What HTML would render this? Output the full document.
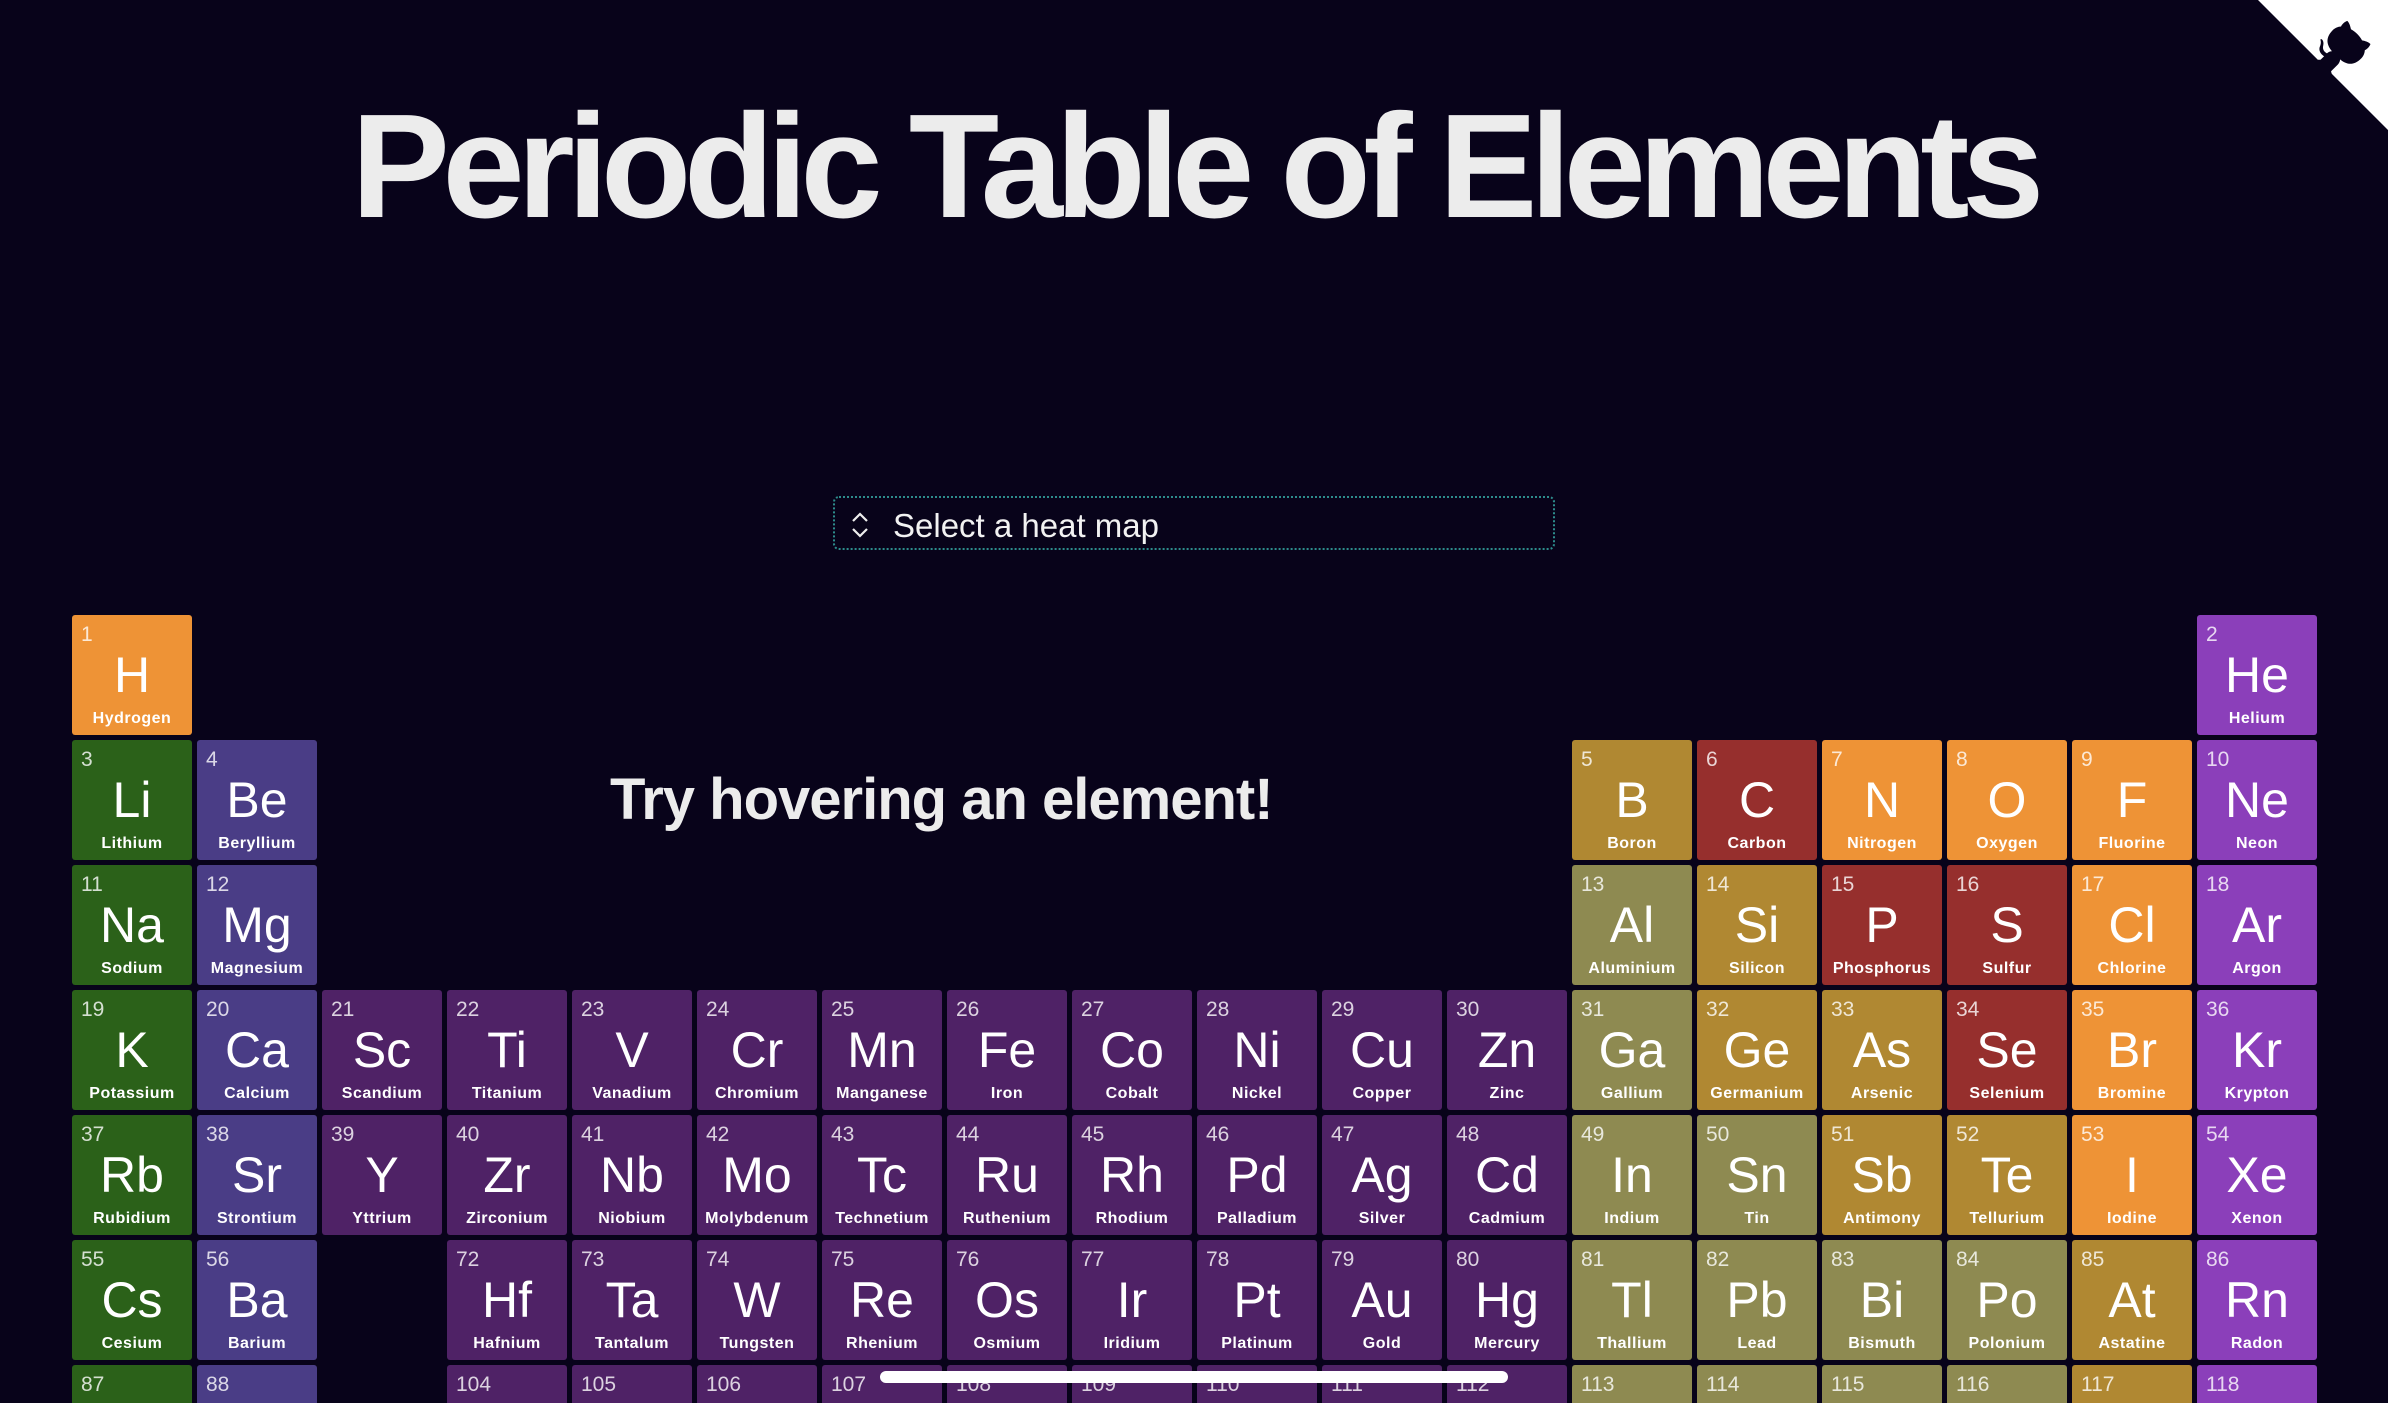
<!DOCTYPE html>
<html><head><meta charset="utf-8"><style>
html,body{margin:0;padding:0;background:#08031a;width:2388px;height:1403px;overflow:hidden;font-family:"Liberation Sans",sans-serif;color:#fff}
.wrap{position:absolute;left:0;top:0;width:2388px;height:1403px;overflow:hidden}
h1{position:absolute;left:0;width:2388px;top:92px;margin:0;text-align:center;font-size:148px;font-weight:900;letter-spacing:-7.5px;color:#ececec;line-height:150px}
.sel{position:absolute;left:833px;top:496px;width:722px;height:54px;border:2px dotted #2d8c8c;border-radius:6px;box-sizing:border-box}
.sel span{position:absolute;left:58px;top:9px;font-size:33px;color:#f2f2f2}
.sel svg{position:absolute;left:14px;top:12px}
.try{position:absolute;left:610px;top:766px;font-size:58px;font-weight:900;color:#ececec;letter-spacing:-1px}
.gw{position:absolute;left:72px;top:615px;width:2245px;height:788px;overflow:hidden}
.g{display:grid;grid-template-columns:repeat(18,120px);grid-auto-rows:120px;gap:5px}
.c{position:relative;border-radius:3px;overflow:hidden}
.c i{position:absolute;left:9px;top:8px;font-style:normal;font-size:21px;color:rgba(255,255,255,.8)}
.c b{position:absolute;left:0;right:0;top:30px;text-align:center;font-size:50px;font-weight:400;line-height:60px}
.c s{position:absolute;left:0;right:0;top:95px;text-align:center;font-size:16px;font-weight:700;text-decoration:none;letter-spacing:.5px}
.a{background:#2b6119}.e{background:#4a3d86}.t{background:#4f2266}.p{background:#8e8a51}.m{background:#b08832}.r{background:#962f2d}.o{background:#ee9336}.n{background:#8b3fba}
.bar{position:absolute;left:880px;top:1371px;width:628px;height:12px;border-radius:6px;background:#fff}
.corner{position:absolute;right:0;top:0}
</style></head><body><div class="wrap">
<h1>Periodic Table of Elements</h1>
<svg class="corner" width="130" height="130" viewBox="0 0 250 250"><path fill="#fff" d="M0,0 L115,115 L130,115 L142,142 L250,250 L250,0 Z"/><path fill="#08031a" d="M128.3,109.0 C113.8,99.7 119.0,89.6 119.0,89.6 C122.0,82.7 120.5,78.6 120.5,78.6 C119.2,72.0 123.4,76.3 123.4,76.3 C127.3,80.9 125.5,87.3 125.5,87.3 C122.9,97.6 130.6,101.9 134.4,103.2"/><path fill="#08031a" d="M115.0,115.0 C114.9,115.1 118.7,116.5 119.8,115.4 L133.7,101.6 C136.9,99.2 139.9,98.4 142.2,98.6 C133.8,88.0 127.5,74.4 143.8,58.0 C148.5,53.4 154.0,51.2 159.7,51.0 C160.3,49.4 163.2,43.6 171.4,40.1 C171.4,40.1 176.1,42.5 178.8,56.2 C183.1,58.6 187.2,61.8 190.9,65.4 C194.5,69.0 197.7,73.2 200.1,77.6 C213.8,80.2 216.3,84.9 216.3,84.9 C212.7,93.1 206.9,96.0 205.4,96.6 C205.1,102.4 203.0,107.8 198.3,112.5 C181.9,128.9 168.3,122.5 157.7,114.1 C157.9,116.9 156.7,120.9 152.7,124.9 L141.0,136.5 C139.8,137.7 141.6,141.9 141.8,141.8 Z"/></svg>
<div class="sel"><svg width="22" height="30" viewBox="0 0 22 30"><path d="M4 11 L11 4 L18 11 M4 19 L11 26 L18 19" stroke="#eee" stroke-width="2.2" fill="none"/></svg><span>Select a heat map</span></div>
<div class="try">Try hovering an element!</div>
<div class="gw"><div class="g">
<div class="c o" style="grid-area:1/1"><i>1</i><b>H</b><s>Hydrogen</s></div>
<div class="c n" style="grid-area:1/18"><i>2</i><b>He</b><s>Helium</s></div>
<div class="c a" style="grid-area:2/1"><i>3</i><b>Li</b><s>Lithium</s></div>
<div class="c e" style="grid-area:2/2"><i>4</i><b>Be</b><s>Beryllium</s></div>
<div class="c m" style="grid-area:2/13"><i>5</i><b>B</b><s>Boron</s></div>
<div class="c r" style="grid-area:2/14"><i>6</i><b>C</b><s>Carbon</s></div>
<div class="c o" style="grid-area:2/15"><i>7</i><b>N</b><s>Nitrogen</s></div>
<div class="c o" style="grid-area:2/16"><i>8</i><b>O</b><s>Oxygen</s></div>
<div class="c o" style="grid-area:2/17"><i>9</i><b>F</b><s>Fluorine</s></div>
<div class="c n" style="grid-area:2/18"><i>10</i><b>Ne</b><s>Neon</s></div>
<div class="c a" style="grid-area:3/1"><i>11</i><b>Na</b><s>Sodium</s></div>
<div class="c e" style="grid-area:3/2"><i>12</i><b>Mg</b><s>Magnesium</s></div>
<div class="c p" style="grid-area:3/13"><i>13</i><b>Al</b><s>Aluminium</s></div>
<div class="c m" style="grid-area:3/14"><i>14</i><b>Si</b><s>Silicon</s></div>
<div class="c r" style="grid-area:3/15"><i>15</i><b>P</b><s>Phosphorus</s></div>
<div class="c r" style="grid-area:3/16"><i>16</i><b>S</b><s>Sulfur</s></div>
<div class="c o" style="grid-area:3/17"><i>17</i><b>Cl</b><s>Chlorine</s></div>
<div class="c n" style="grid-area:3/18"><i>18</i><b>Ar</b><s>Argon</s></div>
<div class="c a" style="grid-area:4/1"><i>19</i><b>K</b><s>Potassium</s></div>
<div class="c e" style="grid-area:4/2"><i>20</i><b>Ca</b><s>Calcium</s></div>
<div class="c t" style="grid-area:4/3"><i>21</i><b>Sc</b><s>Scandium</s></div>
<div class="c t" style="grid-area:4/4"><i>22</i><b>Ti</b><s>Titanium</s></div>
<div class="c t" style="grid-area:4/5"><i>23</i><b>V</b><s>Vanadium</s></div>
<div class="c t" style="grid-area:4/6"><i>24</i><b>Cr</b><s>Chromium</s></div>
<div class="c t" style="grid-area:4/7"><i>25</i><b>Mn</b><s>Manganese</s></div>
<div class="c t" style="grid-area:4/8"><i>26</i><b>Fe</b><s>Iron</s></div>
<div class="c t" style="grid-area:4/9"><i>27</i><b>Co</b><s>Cobalt</s></div>
<div class="c t" style="grid-area:4/10"><i>28</i><b>Ni</b><s>Nickel</s></div>
<div class="c t" style="grid-area:4/11"><i>29</i><b>Cu</b><s>Copper</s></div>
<div class="c t" style="grid-area:4/12"><i>30</i><b>Zn</b><s>Zinc</s></div>
<div class="c p" style="grid-area:4/13"><i>31</i><b>Ga</b><s>Gallium</s></div>
<div class="c m" style="grid-area:4/14"><i>32</i><b>Ge</b><s>Germanium</s></div>
<div class="c m" style="grid-area:4/15"><i>33</i><b>As</b><s>Arsenic</s></div>
<div class="c r" style="grid-area:4/16"><i>34</i><b>Se</b><s>Selenium</s></div>
<div class="c o" style="grid-area:4/17"><i>35</i><b>Br</b><s>Bromine</s></div>
<div class="c n" style="grid-area:4/18"><i>36</i><b>Kr</b><s>Krypton</s></div>
<div class="c a" style="grid-area:5/1"><i>37</i><b>Rb</b><s>Rubidium</s></div>
<div class="c e" style="grid-area:5/2"><i>38</i><b>Sr</b><s>Strontium</s></div>
<div class="c t" style="grid-area:5/3"><i>39</i><b>Y</b><s>Yttrium</s></div>
<div class="c t" style="grid-area:5/4"><i>40</i><b>Zr</b><s>Zirconium</s></div>
<div class="c t" style="grid-area:5/5"><i>41</i><b>Nb</b><s>Niobium</s></div>
<div class="c t" style="grid-area:5/6"><i>42</i><b>Mo</b><s>Molybdenum</s></div>
<div class="c t" style="grid-area:5/7"><i>43</i><b>Tc</b><s>Technetium</s></div>
<div class="c t" style="grid-area:5/8"><i>44</i><b>Ru</b><s>Ruthenium</s></div>
<div class="c t" style="grid-area:5/9"><i>45</i><b>Rh</b><s>Rhodium</s></div>
<div class="c t" style="grid-area:5/10"><i>46</i><b>Pd</b><s>Palladium</s></div>
<div class="c t" style="grid-area:5/11"><i>47</i><b>Ag</b><s>Silver</s></div>
<div class="c t" style="grid-area:5/12"><i>48</i><b>Cd</b><s>Cadmium</s></div>
<div class="c p" style="grid-area:5/13"><i>49</i><b>In</b><s>Indium</s></div>
<div class="c p" style="grid-area:5/14"><i>50</i><b>Sn</b><s>Tin</s></div>
<div class="c m" style="grid-area:5/15"><i>51</i><b>Sb</b><s>Antimony</s></div>
<div class="c m" style="grid-area:5/16"><i>52</i><b>Te</b><s>Tellurium</s></div>
<div class="c o" style="grid-area:5/17"><i>53</i><b>I</b><s>Iodine</s></div>
<div class="c n" style="grid-area:5/18"><i>54</i><b>Xe</b><s>Xenon</s></div>
<div class="c a" style="grid-area:6/1"><i>55</i><b>Cs</b><s>Cesium</s></div>
<div class="c e" style="grid-area:6/2"><i>56</i><b>Ba</b><s>Barium</s></div>
<div class="c t" style="grid-area:6/4"><i>72</i><b>Hf</b><s>Hafnium</s></div>
<div class="c t" style="grid-area:6/5"><i>73</i><b>Ta</b><s>Tantalum</s></div>
<div class="c t" style="grid-area:6/6"><i>74</i><b>W</b><s>Tungsten</s></div>
<div class="c t" style="grid-area:6/7"><i>75</i><b>Re</b><s>Rhenium</s></div>
<div class="c t" style="grid-area:6/8"><i>76</i><b>Os</b><s>Osmium</s></div>
<div class="c t" style="grid-area:6/9"><i>77</i><b>Ir</b><s>Iridium</s></div>
<div class="c t" style="grid-area:6/10"><i>78</i><b>Pt</b><s>Platinum</s></div>
<div class="c t" style="grid-area:6/11"><i>79</i><b>Au</b><s>Gold</s></div>
<div class="c t" style="grid-area:6/12"><i>80</i><b>Hg</b><s>Mercury</s></div>
<div class="c p" style="grid-area:6/13"><i>81</i><b>Tl</b><s>Thallium</s></div>
<div class="c p" style="grid-area:6/14"><i>82</i><b>Pb</b><s>Lead</s></div>
<div class="c p" style="grid-area:6/15"><i>83</i><b>Bi</b><s>Bismuth</s></div>
<div class="c p" style="grid-area:6/16"><i>84</i><b>Po</b><s>Polonium</s></div>
<div class="c m" style="grid-area:6/17"><i>85</i><b>At</b><s>Astatine</s></div>
<div class="c n" style="grid-area:6/18"><i>86</i><b>Rn</b><s>Radon</s></div>
<div class="c a" style="grid-area:7/1"><i>87</i><b>Fr</b><s>Francium</s></div>
<div class="c e" style="grid-area:7/2"><i>88</i><b>Ra</b><s>Radium</s></div>
<div class="c t" style="grid-area:7/4"><i>104</i><b>Rf</b><s>Rutherfordium</s></div>
<div class="c t" style="grid-area:7/5"><i>105</i><b>Db</b><s>Dubnium</s></div>
<div class="c t" style="grid-area:7/6"><i>106</i><b>Sg</b><s>Seaborgium</s></div>
<div class="c t" style="grid-area:7/7"><i>107</i><b>Bh</b><s>Bohrium</s></div>
<div class="c t" style="grid-area:7/8"><i>108</i><b>Hs</b><s>Hassium</s></div>
<div class="c t" style="grid-area:7/9"><i>109</i><b>Mt</b><s>Meitnerium</s></div>
<div class="c t" style="grid-area:7/10"><i>110</i><b>Ds</b><s>Darmstadtium</s></div>
<div class="c t" style="grid-area:7/11"><i>111</i><b>Rg</b><s>Roentgenium</s></div>
<div class="c t" style="grid-area:7/12"><i>112</i><b>Cn</b><s>Copernicium</s></div>
<div class="c p" style="grid-area:7/13"><i>113</i><b>Nh</b><s>Nihonium</s></div>
<div class="c p" style="grid-area:7/14"><i>114</i><b>Fl</b><s>Flerovium</s></div>
<div class="c p" style="grid-area:7/15"><i>115</i><b>Mc</b><s>Moscovium</s></div>
<div class="c p" style="grid-area:7/16"><i>116</i><b>Lv</b><s>Livermorium</s></div>
<div class="c m" style="grid-area:7/17"><i>117</i><b>Ts</b><s>Tennessine</s></div>
<div class="c n" style="grid-area:7/18"><i>118</i><b>Og</b><s>Oganesson</s></div>
</div></div>
<div class="bar"></div>
</div></body></html>
